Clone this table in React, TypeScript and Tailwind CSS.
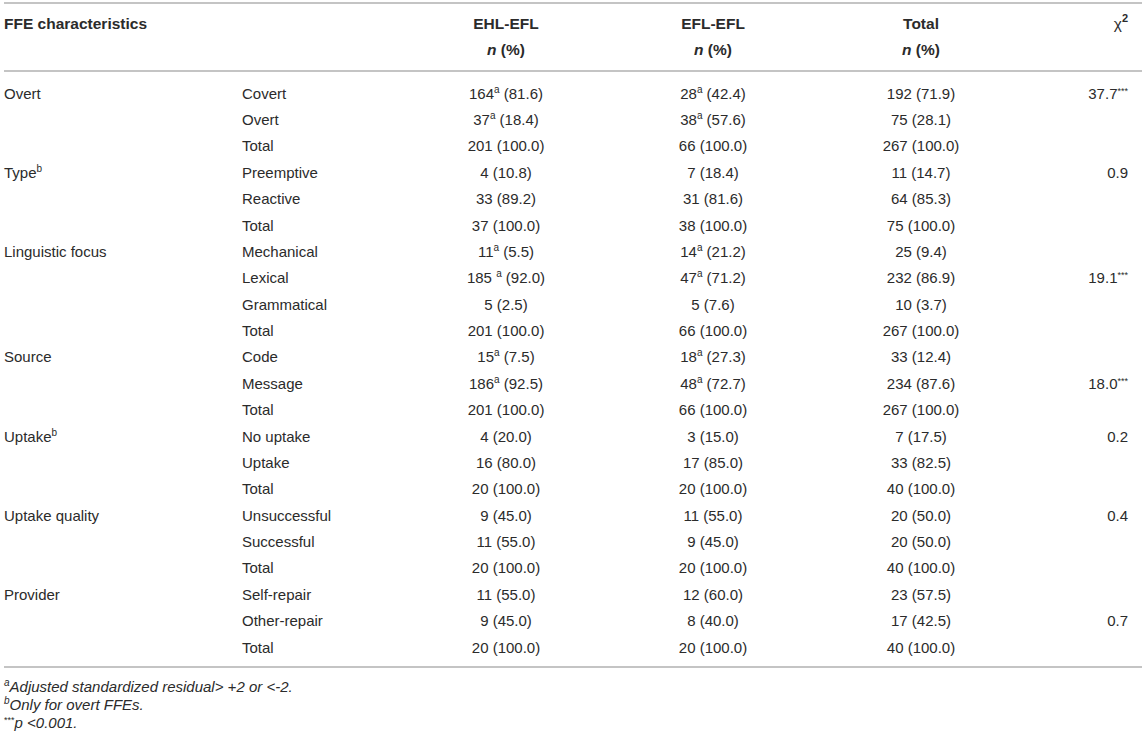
type Cell = { v: string; sup?: string; gap?: boolean; pct: string };

type Row = {
  group?: string;
  groupSup?: string;
  label: string;
  ehl: Cell;
  efl: Cell;
  total: string;
  chi?: string;
  stars?: boolean;
};

const c = (v: string, pct: string, sup?: string, gap?: boolean): Cell => ({ v, pct, sup, gap });

const rows: Row[] = [
  { group: "Overt", label: "Covert", ehl: c("164", "81.6", "a"), efl: c("28", "42.4", "a"), total: "192 (71.9)", chi: "37.7", stars: true },
  { label: "Overt", ehl: c("37", "18.4", "a"), efl: c("38", "57.6", "a"), total: "75 (28.1)" },
  { label: "Total", ehl: c("201", "100.0"), efl: c("66", "100.0"), total: "267 (100.0)" },
  { group: "Type", groupSup: "b", label: "Preemptive", ehl: c("4", "10.8"), efl: c("7", "18.4"), total: "11 (14.7)", chi: "0.9" },
  { label: "Reactive", ehl: c("33", "89.2"), efl: c("31", "81.6"), total: "64 (85.3)" },
  { label: "Total", ehl: c("37", "100.0"), efl: c("38", "100.0"), total: "75 (100.0)" },
  { group: "Linguistic focus", label: "Mechanical", ehl: c("11", "5.5", "a"), efl: c("14", "21.2", "a"), total: "25 (9.4)" },
  { label: "Lexical", ehl: c("185", "92.0", "a", true), efl: c("47", "71.2", "a"), total: "232 (86.9)", chi: "19.1", stars: true },
  { label: "Grammatical", ehl: c("5", "2.5"), efl: c("5", "7.6"), total: "10 (3.7)" },
  { label: "Total", ehl: c("201", "100.0"), efl: c("66", "100.0"), total: "267 (100.0)" },
  { group: "Source", label: "Code", ehl: c("15", "7.5", "a"), efl: c("18", "27.3", "a"), total: "33 (12.4)" },
  { label: "Message", ehl: c("186", "92.5", "a"), efl: c("48", "72.7", "a"), total: "234 (87.6)", chi: "18.0", stars: true },
  { label: "Total", ehl: c("201", "100.0"), efl: c("66", "100.0"), total: "267 (100.0)" },
  { group: "Uptake", groupSup: "b", label: "No uptake", ehl: c("4", "20.0"), efl: c("3", "15.0"), total: "7 (17.5)", chi: "0.2" },
  { label: "Uptake", ehl: c("16", "80.0"), efl: c("17", "85.0"), total: "33 (82.5)" },
  { label: "Total", ehl: c("20", "100.0"), efl: c("20", "100.0"), total: "40 (100.0)" },
  { group: "Uptake quality", label: "Unsuccessful", ehl: c("9", "45.0"), efl: c("11", "55.0"), total: "20 (50.0)", chi: "0.4" },
  { label: "Successful", ehl: c("11", "55.0"), efl: c("9", "45.0"), total: "20 (50.0)" },
  { label: "Total", ehl: c("20", "100.0"), efl: c("20", "100.0"), total: "40 (100.0)" },
  { group: "Provider", label: "Self-repair", ehl: c("11", "55.0"), efl: c("12", "60.0"), total: "23 (57.5)" },
  { label: "Other-repair", ehl: c("9", "45.0"), efl: c("8", "40.0"), total: "17 (42.5)", chi: "0.7" },
  { label: "Total", ehl: c("20", "100.0"), efl: c("20", "100.0"), total: "40 (100.0)" },
];

const cols = "grid grid-cols-[238px_158px_212px_202px_214px_1fr] items-center";

const Sup = ({ children }: { children: string }) => (
  <span className="relative -top-[6px] text-[10px] leading-none">{children}</span>
);

const Count = ({ cell }: { cell: Cell }) => (
  <span className="whitespace-pre">
    {cell.v}
    {cell.gap ? " " : ""}
    {cell.sup ? <Sup>{cell.sup}</Sup> : null} ({cell.pct})
  </span>
);

const App = () => {
  return (
    <div
      className="min-h-[739px] w-[1146px] bg-white px-[4px] pt-[2px] text-[15px] leading-none text-[#2b2b2b]"
      style={{ fontFamily: '"Liberation Sans", Arial, sans-serif' }}
    >
      {/* header */}
      <div className="border-y-2 border-[#c4c4c4] text-[15.5px] font-bold">
        <div className={`${cols} h-[38px] pt-[2px]`}>
          <div>FFE characteristics</div>
          <div />
          <div className="text-center">EHL-EFL</div>
          <div className="text-center">EFL-EFL</div>
          <div className="text-center">Total</div>
          <div className="pr-[14px] text-right font-normal">
            χ<span className="relative -top-[7px] text-[11px] font-bold">2</span>
          </div>
        </div>
        <div className={`${cols} h-[28px] pb-[12px]`}>
          <div />
          <div />
          <div className="text-center">
            <i>n</i> (%)
          </div>
          <div className="text-center">
            <i>n</i> (%)
          </div>
          <div className="text-center">
            <i>n</i> (%)
          </div>
          <div />
        </div>
      </div>

      {/* body */}
      <div className="border-b-2 border-[#c4c4c4] pb-[6px] pt-[8px]">
        {rows.map((r, i) => (
          <div key={i} className={`${cols} h-[26.38px]`}>
            <div>
              {r.group}
              {r.groupSup ? <Sup>{r.groupSup}</Sup> : null}
            </div>
            <div>{r.label}</div>
            <div className="text-center">
              <Count cell={r.ehl} />
            </div>
            <div className="text-center">
              <Count cell={r.efl} />
            </div>
            <div className="text-center">{r.total}</div>
            <div className="pr-[14px] text-right">
              {r.chi}
              {r.stars ? <span className="relative -top-[5px] text-[9px] leading-none">***</span> : null}
            </div>
          </div>
        ))}
      </div>

      {/* notes */}
      <div className="mt-[11px] flex flex-col gap-[3px] text-[15px] italic leading-[15px]">
        <div>
          <Sup>a</Sup>Adjusted standardized residual&gt; +2 or &lt;-2.
        </div>
        <div>
          <Sup>b</Sup>Only for overt FFEs.
        </div>
        <div>
          <span className="relative -top-[5px] text-[9px] not-italic leading-none">***</span>p &lt;0.001.
        </div>
      </div>
    </div>
  );
};

export default App;
